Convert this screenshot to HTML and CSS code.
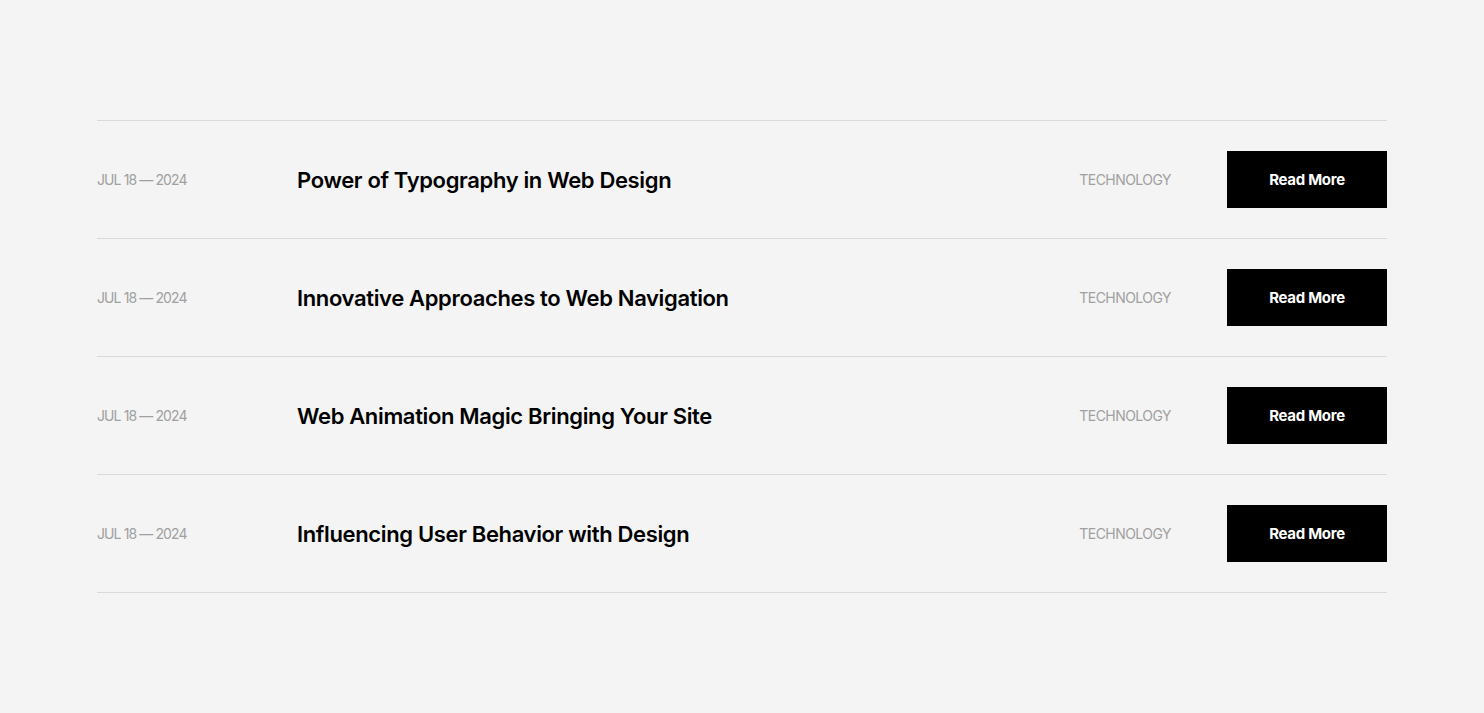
FILE: index.html
```html
<!DOCTYPE html>
<html lang="en">
<head>
<meta charset="utf-8">
<title>Blog list</title>
<link rel="stylesheet" href="styles.css">
</head>
<body>
<main class="page">
  <ul class="posts">
    <li class="post">
      <span class="post-date">JUL 18 — 2024</span>
      <h3 class="post-title">Power of Typography in Web Design</h3>
      <span class="post-cat">TECHNOLOGY</span>
      <a class="post-btn" href="#">Read More</a>
    </li>
    <li class="post">
      <span class="post-date">JUL 18 — 2024</span>
      <h3 class="post-title">Innovative Approaches to Web Navigation</h3>
      <span class="post-cat">TECHNOLOGY</span>
      <a class="post-btn" href="#">Read More</a>
    </li>
    <li class="post">
      <span class="post-date">JUL 18 — 2024</span>
      <h3 class="post-title">Web Animation Magic Bringing Your Site</h3>
      <span class="post-cat">TECHNOLOGY</span>
      <a class="post-btn" href="#">Read More</a>
    </li>
    <li class="post">
      <span class="post-date">JUL 18 — 2024</span>
      <h3 class="post-title">Influencing User Behavior with Design</h3>
      <span class="post-cat">TECHNOLOGY</span>
      <a class="post-btn" href="#">Read More</a>
    </li>
  </ul>
</main>
</body>
</html>
```

FILE: styles.css
```css
* { box-sizing: border-box; }
html, body { margin: 0; padding: 0; }
body {
  background: #f4f4f4;
  font-family: Inter, "Noto Sans", sans-serif;
  color: #000;
  height: 713px;
}
.page {
  padding: 120px 97px 0 97px;
}
.posts {
  list-style: none;
  margin: 0;
  padding: 0;
  border-top: 1px solid #d9d9d9;
}
.post {
  display: flex;
  align-items: center;
  padding: 30px 0;
  border-bottom: 1px solid #d9d9d9;
}
.post-date {
  width: 200px;
  flex: none;
  font-size: 14px;
  color: #a0a0a0;
  letter-spacing: -0.9px;
}
.post-title {
  flex: 1;
  margin: 0;
  font-size: 22px;
  font-weight: 600;
  letter-spacing: -0.35px;
}
.post-cat {
  font-size: 14px;
  color: #a0a0a0;
  letter-spacing: -0.55px;
  margin-right: 56px;
}
.post-btn {
  flex: none;
  width: 160px;
  height: 57px;
  background: #000;
  color: #fff;
  text-decoration: none;
  font-size: 15px;
  font-weight: 700;
  letter-spacing: -0.3px;
  display: flex;
  align-items: center;
  justify-content: center;
}
```
